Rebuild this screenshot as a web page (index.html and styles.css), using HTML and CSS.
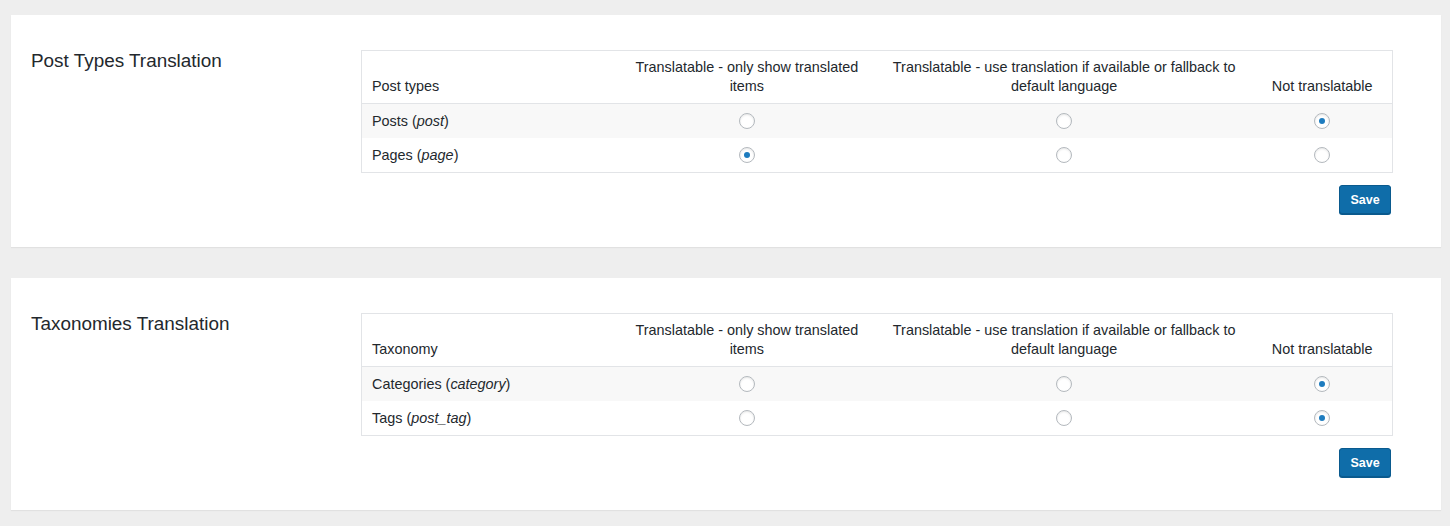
FILE: index.html
```html
<!DOCTYPE html>
<html lang="en">
<head>
<meta charset="utf-8">
<title>Translation settings</title>
<link rel="stylesheet" href="styles.css">
</head>
<body>
<div class="page">
  <section class="card">
    <h2 class="card-title">Post Types Translation</h2>
    <div class="card-body">
      <table class="opts">
        <thead>
          <tr>
            <th class="col-name">Post types</th>
            <th class="col-a">Translatable - only show translated items</th>
            <th class="col-b">Translatable - use translation if available or fallback to default language</th>
            <th class="col-c">Not translatable</th>
          </tr>
        </thead>
        <tbody>
          <tr class="alt">
            <td>Posts (<em>post</em>)</td>
            <td class="c"><input type="radio" name="pt-post"></td>
            <td class="c"><input type="radio" name="pt-post"></td>
            <td class="c"><input type="radio" name="pt-post" checked></td>
          </tr>
          <tr>
            <td>Pages (<em>page</em>)</td>
            <td class="c"><input type="radio" name="pt-page" checked></td>
            <td class="c"><input type="radio" name="pt-page"></td>
            <td class="c"><input type="radio" name="pt-page"></td>
          </tr>
        </tbody>
      </table>
      <div class="actions"><button class="btn" type="button">Save</button></div>
    </div>
  </section>

  <section class="card">
    <h2 class="card-title">Taxonomies Translation</h2>
    <div class="card-body">
      <table class="opts">
        <thead>
          <tr>
            <th class="col-name">Taxonomy</th>
            <th class="col-a">Translatable - only show translated items</th>
            <th class="col-b">Translatable - use translation if available or fallback to default language</th>
            <th class="col-c">Not translatable</th>
          </tr>
        </thead>
        <tbody>
          <tr class="alt">
            <td>Categories (<em>category</em>)</td>
            <td class="c"><input type="radio" name="tx-cat"></td>
            <td class="c"><input type="radio" name="tx-cat"></td>
            <td class="c"><input type="radio" name="tx-cat" checked></td>
          </tr>
          <tr>
            <td>Tags (<em>post_tag</em>)</td>
            <td class="c"><input type="radio" name="tx-tag"></td>
            <td class="c"><input type="radio" name="tx-tag"></td>
            <td class="c"><input type="radio" name="tx-tag" checked></td>
          </tr>
        </tbody>
      </table>
      <div class="actions"><button class="btn" type="button">Save</button></div>
    </div>
  </section>
</div>
</body>
</html>
```

FILE: styles.css
```css
html, body {
  margin: 0;
  padding: 0;
  background: #eeeeee;
}

body {
  font-family: "Liberation Sans", Arial, Helvetica, sans-serif;
  font-size: 14.4px;
  color: #23282d;
}

.page {
  display: flex;
  flex-direction: column;
  gap: 31px;
  padding: 15px 9px 16px 11px;
}

.card {
  display: flex;
  background: #ffffff;
  box-shadow: 0 1px 1px rgba(0, 0, 0, 0.05);
  padding: 35px 48px 33px 20px;
  height: 232px;
  box-sizing: border-box;
}

.card-title {
  width: 330px;
  flex: none;
  margin: 0;
  font-size: 18.9px;
  line-height: 24px;
  font-weight: 400;
  color: #23282d;
  position: relative;
  top: -1px;
}

.card-body {
  width: 1032px;
  display: flex;
  flex-direction: column;
  gap: 12px;
}

.opts {
  width: 1032px;
  border-collapse: collapse;
  border: 1px solid #e2e4e7;
  table-layout: fixed;
}

.opts th {
  font-weight: 400;
  line-height: 19px;
  padding: 7px 10px;
  vertical-align: bottom;
  text-align: center;
  border-bottom: 1px solid #e2e4e7;
  box-sizing: border-box;
}

.opts th.col-name {
  text-align: left;
  width: 256px;
}

.opts th.col-a { width: 258px; }
.opts th.col-b { width: 376px; }
.opts th.col-c { width: 140px; }

.opts td {
  padding: 8px 10px;
  line-height: 18px;
  height: 18px;
  vertical-align: top;
}

.opts td.c {
  text-align: center;
}

.opts tr.alt td {
  background: #f8f8f8;
}

.opts em {
  font-style: italic;
}

.opts input[type="radio"] {
  -webkit-appearance: none;
  appearance: none;
  width: 16px;
  height: 16px;
  margin: 1px auto 0;
  border: 1px solid #b4b9be;
  border-radius: 50%;
  background: #ffffff;
  box-shadow: inset 0 1px 2px rgba(0, 0, 0, 0.1);
  box-sizing: border-box;
  display: flex;
  align-items: center;
  justify-content: center;
}

.opts input[type="radio"]:checked::before {
  content: "";
  width: 6px;
  height: 6px;
  border-radius: 50%;
  background: #1e7cbf;
}

.actions {
  display: flex;
  justify-content: flex-end;
  padding-right: 2px;
}

.btn {
  height: 29px;
  width: 52px;
  padding: 0;
  font-family: "Liberation Sans", Arial, Helvetica, sans-serif;
  font-size: 12.5px;
  font-weight: 700;
  color: #ffffff;
  background: #0f6da9;
  border: 1px solid #0a5a8e;
  border-radius: 3px;
  box-shadow: 0 1px 0 #0a5a8e;
}
```
